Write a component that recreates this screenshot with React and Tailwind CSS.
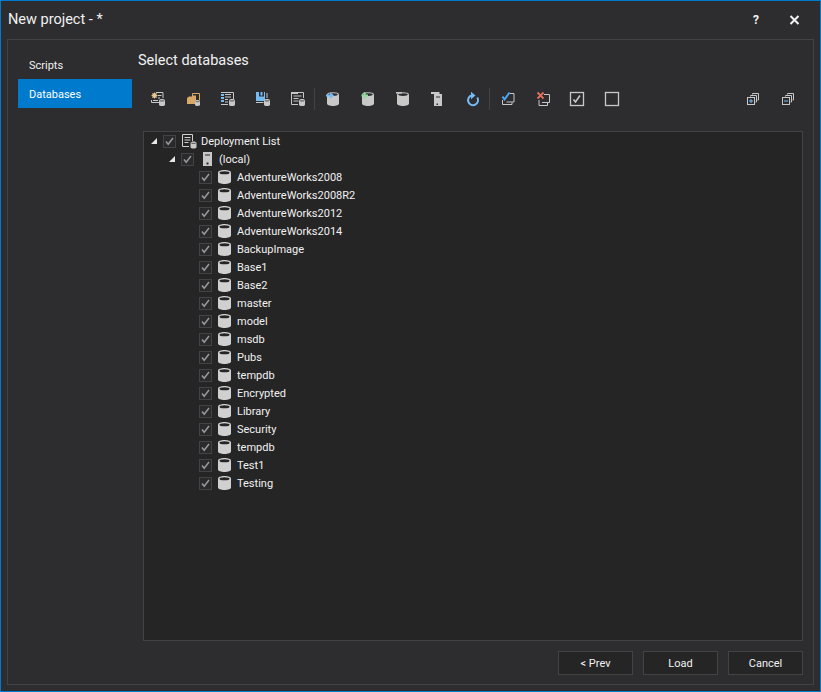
import React from 'react';

// small database drum, bottom right of most toolbar glyphs
function MiniDb({ x = 10, y = 8 }) {
  return (
    <g transform={`translate(${x} ${y})`}>
      <path d="M0 1.500C0 .5 1.300 0 3 0s3 .5 3 1.500v4C6 6.500 4.700 7 3 7s-3-.5-3-1.500z" fill="#c8c8c8" />
      <path d="M.8 1.600c.5.5 4 .5 4.400 0" fill="none" stroke="#2d2d30" strokeWidth=".8" />
    </g>
  );
}

function Db({ children }) {
  return (
    <svg width="16" height="16" viewBox="0 0 16 16">
      <path d="M3 3.500C3 2 5.500 1.200 9 1.200s6 .8 6 2.300v9C15 14 12.300 15 9 15s-6-1-6-2.500z" fill="#c8c8c8" />
      <ellipse cx="9" cy="3.600" rx="4.800" ry="1.400" fill="#2d2d30" />
      {children}
    </svg>
  );
}

const toolbarIcons = {
  newList: (
    <svg width="16" height="16" viewBox="0 0 16 16">
      <path d="M7 1.500h7V7M2.500 9v2.500H10" fill="none" stroke="#c8c8c8" />
      <path d="M5.500 1l.7 1.500L7.800 2l-.4 1.700L9 4.500l-1.600.8.4 1.700-1.600-.5L5.500 8l-.7-1.500-1.600.5.4-1.700L2 4.500l1.600-.8L3.200 2l1.600.5z" fill="#e9c88f" />
      <path d="M9 4.500h3.500M9 7h2M4 9.500h5" stroke="#c8c8c8" />
      <MiniDb />
    </svg>
  ),
  open: (
    <svg width="16" height="16" viewBox="0 0 16 16">
      <path d="M8.500 5V2.500h7V9" fill="none" stroke="#d9a866" />
      <path d="M3 7l2-1.500h2.500L9 4.500h3V13H3z" fill="#d9a866" />
      <g transform="translate(11 9) scale(.85)">
        <MiniDb x={0} y={0} />
      </g>
    </svg>
  ),
  listBlue: (
    <svg width="16" height="16" viewBox="0 0 16 16">
      <path d="M2 1.500h12.500V8M2 13.500h7" fill="none" stroke="#c8c8c8" />
      <path d="M6 3.500h6M6 6h6M6 8.500h3M6 11h3" stroke="#c8c8c8" />
      <path d="M2 3h3v2H2zM2 6h3v2H2zM2 9h3v2H2z" fill="#75bcf5" />
      <MiniDb />
    </svg>
  ),
  save: (
    <svg width="16" height="16" viewBox="0 0 16 16">
      <path d="M2 1h9v9H2z" fill="#75bcf5" />
      <path d="M5 1h1.500v3.500h2V1H10v4.500H5z" fill="#2d2d30" />
      <path d="M2 11.500h7.500M13 2v5" fill="none" stroke="#c8c8c8" />
      <MiniDb />
    </svg>
  ),
  listGray: (
    <svg width="16" height="16" viewBox="0 0 16 16">
      <path d="M2 1h7v2H2z" fill="#c8c8c8" />
      <path d="M9 1.500h5.500V7M2.500 3v10.500H9" fill="none" stroke="#c8c8c8" />
      <path d="M4.500 5h8M4.500 7.500h5M4.500 10h5" stroke="#c8c8c8" />
      <MiniDb />
    </svg>
  ),
  dbImport: (
    <Db>
      <path d="M2 4.500h5" stroke="#75bcf5" strokeWidth="2" />
      <path d="M6 1l4 3.500L6 8z" fill="#75bcf5" />
    </Db>
  ),
  dbAdd: (
    <Db>
      <path d="M2.500 4.500h6.500M5.750 1.200v6.600" stroke="#8fdc9a" strokeWidth="2" />
    </Db>
  ),
  dbPlain: (
    <Db>
      <path d="M2 1.800h6" stroke="#c8c8c8" strokeWidth="1.500" />
    </Db>
  ),
  server: (
    <svg width="16" height="16" viewBox="0 0 16 16">
      <path d="M2 1h8.500v2H13v12H5V3H2z" fill="#c8c8c8" />
      <path d="M7 5.500h4v1H7zM7.500 12.500h1.500V14H7.500z" fill="#2d2d30" />
    </svg>
  ),
  refresh: (
    <svg width="16" height="16" viewBox="0 0 16 16">
      <path d="M13.300 6.500A5 5 0 1 1 8 4.300" fill="none" stroke="#75bcf5" strokeWidth="2" />
      <path d="M7 .8v7.400L11.500 4.500z" fill="#75bcf5" />
    </svg>
  ),
  checkAll: (
    <svg width="16" height="16" viewBox="0 0 16 16">
      <path d="M10.500 2.500h4.500V11H7.500" fill="none" stroke="#c8c8c8" />
      <path d="M3.500 9v4.500H13v-2" fill="none" stroke="#c8c8c8" />
      <path d="M3.500 5.500l2 3L10.500 1.500" fill="none" stroke="#4ea6f0" strokeWidth="2" />
    </svg>
  ),
  uncheckAll: (
    <svg width="16" height="16" viewBox="0 0 16 16">
      <path d="M10 3.500h5.500v8H8" fill="none" stroke="#c8c8c8" />
      <path d="M5 9v5.500h8.500v-3" fill="none" stroke="#c8c8c8" />
      <path d="M3.500 1.500l6 6M9.500 1.500l-6 6" stroke="#e0705c" strokeWidth="1.800" />
    </svg>
  ),
  boxChecked: (
    <svg width="16" height="16" viewBox="0 0 16 16">
      <rect x="1.500" y="1.500" width="13" height="13" fill="none" stroke="#c8c8c8" strokeWidth="1.300" />
      <path d="M4.500 8.500l2 2.500 4.500-6.500" fill="none" stroke="#c8c8c8" strokeWidth="1.600" />
    </svg>
  ),
  boxEmpty: (
    <svg width="16" height="16" viewBox="0 0 16 16">
      <rect x="1.500" y="1.500" width="13" height="13" fill="none" stroke="#c8c8c8" strokeWidth="1.300" />
    </svg>
  ),
};

function StackIcon({ minus }) {
  return (
    <svg width="12" height="12" viewBox="0 0 12 12">
      <path d="M5.500 1.500V.5h6V7h-1M3.500 3.500v-1h6V9h-1" fill="none" stroke="#c8c8c8" />
      <rect x=".5" y="4.500" width="7" height="7" fill="#2d2d30" stroke="#c8c8c8" />
      <path d={minus ? 'M2 8h4' : 'M2 8h4M4 6v4'} stroke="#75bcf5" />
    </svg>
  );
}

function ToolButton({ children }) {
  return <button className="flex h-[20px] w-[35px] items-center justify-center">{children}</button>;
}

function Separator() {
  return <div className="-mr-px h-[22px] w-px bg-[#434346]" />;
}

function Check() {
  return (
    <span className="flex h-[13px] w-[13px] shrink-0 items-center justify-center border border-[#434346] bg-[#2a2a2c]">
      <svg width="11" height="11" viewBox="0 0 11 11">
        <path d="M2 5.500l2.200 2.800L9 2" fill="none" stroke="#999999" strokeWidth="1.500" />
      </svg>
    </span>
  );
}

function Arrow() {
  return (
    <svg width="6" height="6" viewBox="0 0 6 6" className="shrink-0">
      <path d="M6 0v6H0z" fill="#e8e8e8" />
    </svg>
  );
}

function DbRow({ name }) {
  return (
    <div className="flex h-[18px] items-center pl-[55px]">
      <Check />
      <span className="ml-[5px] flex w-[14px] justify-center">
        <svg width="13" height="14" viewBox="0 0 13 14">
          <path d="M0 2.500C0 1 2.900 0 6.500 0S13 1 13 2.500v9C13 13 10.100 14 6.500 14S0 13 0 11.500z" fill="#d0d0d0" />
          <ellipse cx="6.500" cy="2.800" rx="5" ry="1.500" fill="#252526" />
        </svg>
      </span>
      <span className="ml-[6px] pt-[2px]">{name}</span>
    </div>
  );
}

const databases = [
  'AdventureWorks2008',
  'AdventureWorks2008R2',
  'AdventureWorks2012',
  'AdventureWorks2014',
  'BackupImage',
  'Base1',
  'Base2',
  'master',
  'model',
  'msdb',
  'Pubs',
  'tempdb',
  'Encrypted',
  'Library',
  'Security',
  'tempdb',
  'Test1',
  'Testing',
];

function FooterButton({ children }) {
  return (
    <button className="h-[24px] w-[75px] border border-[#434346] bg-[#252526] pt-[2px] text-[11px] text-[#f1f1f1]">
      {children}
    </button>
  );
}

export default function App() {
  return (
    <div className="flex h-[692px] w-[821px] flex-col border border-[#007acc] bg-[#2d2d30] font-['Roboto',sans-serif] text-[#f1f1f1]">
      {/* title bar */}
      <div className="flex h-[38px] shrink-0 items-center justify-between pl-[7px]">
        <span className="text-[14.5px]">New project - *</span>
        <div className="flex items-center">
          <span className="w-[38px] text-center text-[12px] font-bold">?</span>
          <svg width="38" height="12" viewBox="0 0 38 12">
            <path d="M15.500 2l8 8M23.500 2l-8 8" stroke="#f1f1f1" strokeWidth="2" />
          </svg>
          <span className="w-[7px]" />
        </div>
      </div>

      <div className="mx-[6px] mb-[6px] flex min-h-0 flex-1 border border-[#434346] pr-[10px] pt-[10px]">
        {/* side menu */}
        <div className="ml-[10px] w-[114px] shrink-0 text-[11px]">
          <div className="flex h-[29px] items-center pl-[11px] pt-[3px]">Scripts</div>
          <div className="flex h-[29px] items-center bg-[#007acc] pl-[11px] pt-[3px] text-white">Databases</div>
        </div>

        <div className="ml-[6px] flex min-w-0 flex-1 flex-col">
          <h1 className="h-[20px] pt-[1px] text-[14.5px] leading-[20px]">Select databases</h1>

          <div className="mt-[19px] flex h-[20px] items-center pl-[1px]">
            <ToolButton>{toolbarIcons.newList}</ToolButton>
            <ToolButton>{toolbarIcons.open}</ToolButton>
            <ToolButton>{toolbarIcons.listBlue}</ToolButton>
            <ToolButton>{toolbarIcons.save}</ToolButton>
            <ToolButton>{toolbarIcons.listGray}</ToolButton>
            <Separator />
            <ToolButton>{toolbarIcons.dbImport}</ToolButton>
            <ToolButton>{toolbarIcons.dbAdd}</ToolButton>
            <ToolButton>{toolbarIcons.dbPlain}</ToolButton>
            <ToolButton>{toolbarIcons.server}</ToolButton>
            <ToolButton>{toolbarIcons.refresh}</ToolButton>
            <Separator />
            <ToolButton>{toolbarIcons.checkAll}</ToolButton>
            <ToolButton>{toolbarIcons.uncheckAll}</ToolButton>
            <ToolButton>{toolbarIcons.boxChecked}</ToolButton>
            <ToolButton>{toolbarIcons.boxEmpty}</ToolButton>
            <div className="-mr-[2px] ml-auto flex">
              <ToolButton><StackIcon /></ToolButton>
              <ToolButton><StackIcon minus /></ToolButton>
            </div>
          </div>

          {/* deployment tree */}
          <div className="ml-[5px] mt-[22px] h-[510px] border border-[#434346] bg-[#252526] text-[11px]">
            <div className="flex h-[18px] items-center pl-[7px]">
              <Arrow />
              <span className="ml-[6px]"><Check /></span>
              <span className="ml-[5px] flex w-[16px] justify-center">
                <svg width="16" height="16" viewBox="0 0 16 16">
                  <path d="M1.500 1.500h10V8M1.500 1.500v12H8" fill="none" stroke="#d0d0d0" />
                  <path d="M3.500 4.500h6M3.500 7h6M3.500 9.500h4" stroke="#d0d0d0" />
                  <MiniDb x={9.500} y={8.500} />
                </svg>
              </span>
              <span className="ml-[4px] pt-[2px]">Deployment List</span>
            </div>
            <div className="flex h-[18px] items-center pl-[25px]">
              <Arrow />
              <span className="ml-[6px]"><Check /></span>
              <span className="ml-[5px] flex w-[16px] justify-center">
                <svg width="9" height="14" viewBox="0 0 9 14">
                  <path d="M0 0h9v14H0z" fill="#c8c8c8" />
                  <path d="M2 2.500h5v1H2zM3.500 10.500h2v2h-2z" fill="#252526" />
                </svg>
              </span>
              <span className="ml-[4px] pt-[2px]">(local)</span>
            </div>
            {databases.map((name, i) => (
              <DbRow key={i} name={name} />
            ))}
          </div>

          <div className="mt-[10px] flex justify-end gap-[10px]">
            <FooterButton>&lt; Prev</FooterButton>
            <FooterButton>Load</FooterButton>
            <FooterButton>Cancel</FooterButton>
          </div>
        </div>
      </div>
    </div>
  );
}
